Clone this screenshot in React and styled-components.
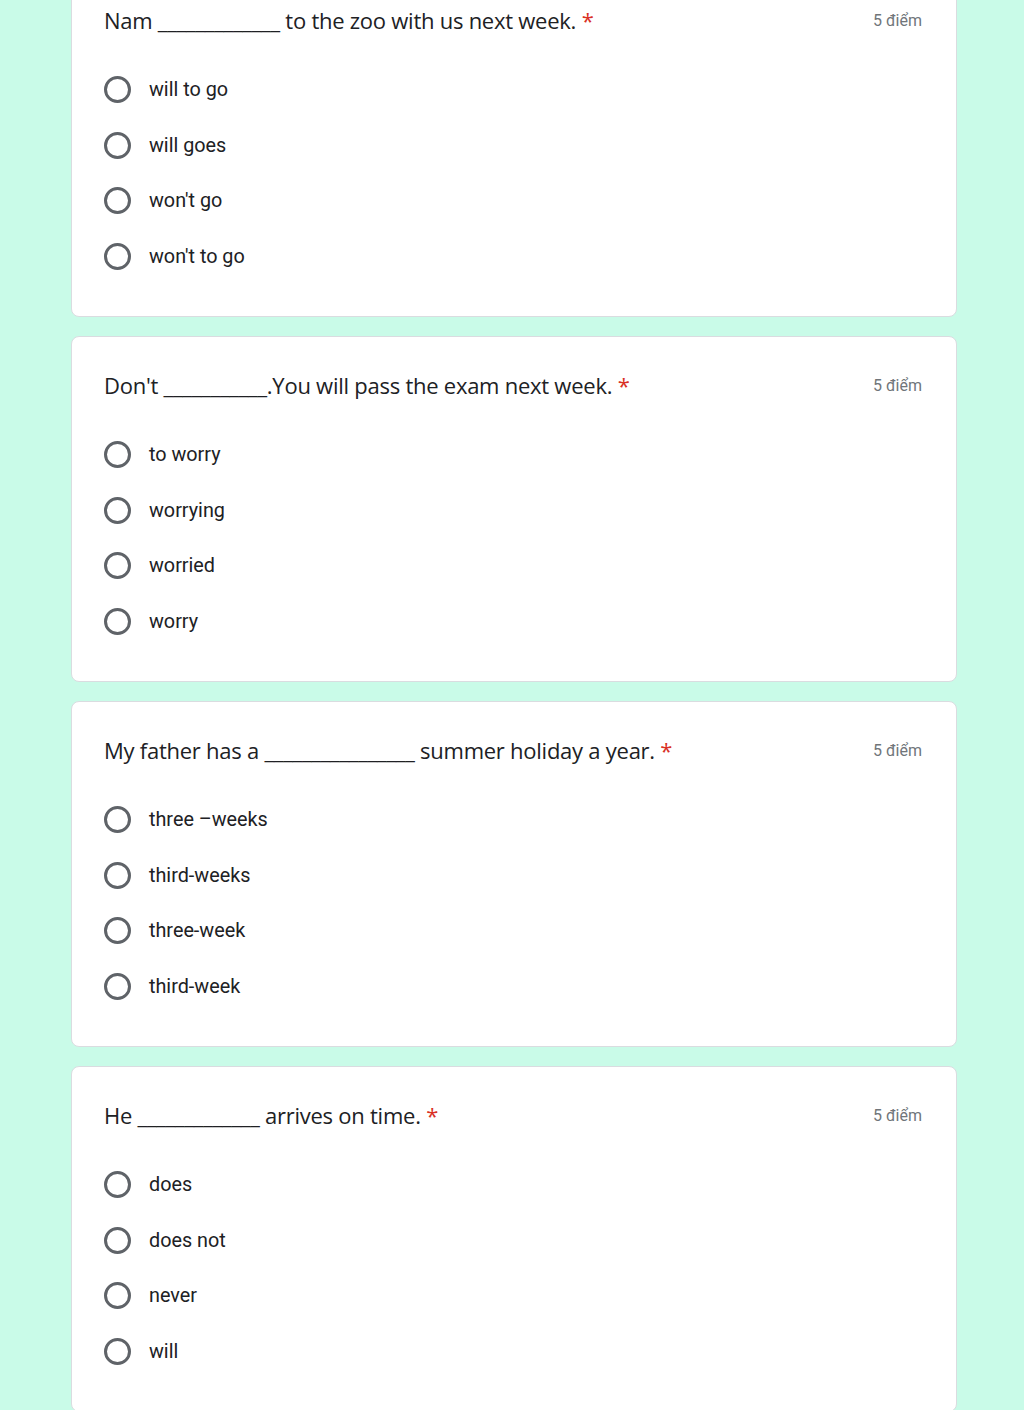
import styled, { createGlobalStyle } from "styled-components";

const GlobalStyle = createGlobalStyle`
  body {
    margin: 0;
    background: #c9fbe8;
    font-family: Roboto, "Liberation Sans", sans-serif;
    overflow: hidden;
  }
`;

const questions = [
  {
    title: "Nam _____________ to the zoo with us next week.",
    options: ["will to go", "will goes", "won't go", "won't to go"],
  },
  {
    title: "Don't ___________.You will pass the exam next week.",
    options: ["to worry", "worrying", "worried", "worry"],
  },
  {
    title: "My father has a ________________ summer holiday a year.",
    options: ["three \u2013weeks", "third-weeks", "three-week", "third-week"],
  },
  {
    title: "He _____________ arrives on time.",
    options: ["does", "does not", "never", "will"],
  },
];

export default function App() {
  return (
    <>
      <GlobalStyle />
      <Page>
        {questions.map((q, i) => (
          <Card key={i}>
            <Header>
              <Title>
                {q.title} <Required>*</Required>
              </Title>
              <Points>5 điểm</Points>
            </Header>
            <Options>
              {q.options.map((o) => (
                <Option key={o}>
                  <Radio />
                  <Label>{o}</Label>
                </Option>
              ))}
            </Options>
          </Card>
        ))}
      </Page>
    </>
  );
}

const Page = styled.div`
  width: 886px;
  margin: -29px auto 0 71px;
  display: flex;
  flex-direction: column;
  gap: 19px;
`;

const Card = styled.div`
  background: #fff;
  border: 1px solid #dadce0;
  border-radius: 8px;
  height: 346px;
  box-sizing: border-box;
  padding: 33px 34px 0 32px;
`;

const Header = styled.div`
  display: flex;
  justify-content: space-between;
  align-items: center;
  height: 30px;
`;

const Title = styled.div`
  font-family: "Open Sans", sans-serif;
  font-size: 22px;
  color: #202124;
  letter-spacing: -0.25px;
`;

const Required = styled.span`
  color: #d93025;
`;

const Points = styled.div`
  font-family: Roboto, sans-serif;
  font-size: 16px;
  color: #70757a;
`;

const Options = styled.div`
  margin-top: 27px;
  display: flex;
  flex-direction: column;
`;

const Option = styled.div`
  height: 55.5px;
  display: flex;
  align-items: center;
  gap: 18px;
`;

const Radio = styled.div`
  width: 27px;
  height: 27px;
  box-sizing: border-box;
  border: 3px solid #5f6368;
  border-radius: 50%;
`;

const Label = styled.span`
  font-size: 19.8px;
  color: #202124;
`;
